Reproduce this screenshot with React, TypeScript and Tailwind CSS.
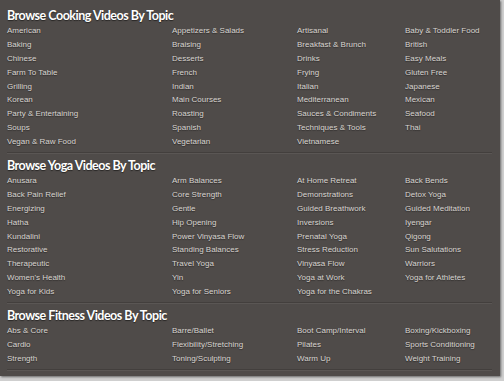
import React from 'react';

type Section = { title: string; items: string[][] };

const sections: Section[] = [
  {
    title: 'Browse Cooking Videos By Topic',
    items: [
      ['American', 'Appetizers & Salads', 'Artisanal', 'Baby & Toddler Food'],
      ['Baking', 'Braising', 'Breakfast & Brunch', 'British'],
      ['Chinese', 'Desserts', 'Drinks', 'Easy Meals'],
      ['Farm To Table', 'French', 'Frying', 'Gluten Free'],
      ['Grilling', 'Indian', 'Italian', 'Japanese'],
      ['Korean', 'Main Courses', 'Mediterranean', 'Mexican'],
      ['Party & Entertaining', 'Roasting', 'Sauces & Condiments', 'Seafood'],
      ['Soups', 'Spanish', 'Techniques & Tools', 'Thai'],
      ['Vegan & Raw Food', 'Vegetarian', 'Vietnamese', ''],
    ],
  },
  {
    title: 'Browse Yoga Videos By Topic',
    items: [
      ['Anusara', 'Arm Balances', 'At Home Retreat', 'Back Bends'],
      ['Back Pain Relief', 'Core Strength', 'Demonstrations', 'Detox Yoga'],
      ['Energizing', 'Gentle', 'Guided Breathwork', 'Guided Meditation'],
      ['Hatha', 'Hip Opening', 'Inversions', 'Iyengar'],
      ['Kundalini', 'Power Vinyasa Flow', 'Prenatal Yoga', 'Qigong'],
      ['Restorative', 'Standing Balances', 'Stress Reduction', 'Sun Salutations'],
      ['Therapeutic', 'Travel Yoga', 'Vinyasa Flow', 'Warriors'],
      ["Women's Health", 'Yin', 'Yoga at Work', 'Yoga for Athletes'],
      ['Yoga for Kids', 'Yoga for Seniors', 'Yoga for the Chakras', ''],
    ],
  },
  {
    title: 'Browse Fitness Videos By Topic',
    items: [
      ['Abs & Core', 'Barre/Ballet', 'Boot Camp/Interval', 'Boxing/Kickboxing'],
      ['Cardio', 'Flexibility/Stretching', 'Pilates', 'Sports Conditioning'],
      ['Strength', 'Toning/Sculpting', 'Warm Up', 'Weight Training'],
    ],
  },
];

const Divider = () => (
  <div className="mt-[3px] mr-[8px] border-t border-[#433f3d] border-b border-b-[#5a5654]" />
);

export default function App() {
  return (
    <div className="w-[504px] h-[381px] bg-[#cfcfcf] overflow-hidden">
      <div className="w-[500px] h-[376px] bg-[#4f4b49] pt-[7px] pl-[7px] shadow-[1px_1px_2px_rgba(0,0,0,0.5)]">
        {sections.map((s, si) => (
          <div key={s.title} className={si > 0 ? 'mt-[3px]' : ''}>
            <h2 className="h-[17px] leading-[17px] text-[12.5px] font-bold text-white tracking-[-0.04em] font-['Lato',sans-serif] [text-shadow:0_1px_1px_rgba(0,0,0,0.5)]">
              {s.title}
            </h2>
            <div className="font-['Liberation_Sans',Arial,sans-serif] text-[8px] text-[#d8d4d0] [text-shadow:0_1px_1px_rgba(0,0,0,0.4)]">
              {s.items.map((row, ri) => (
                <div key={ri} className="grid grid-cols-[165px_125px_108px_1fr] h-[13.9px] leading-[13.9px]">
                  {row.map((item, ci) => (
                    <span key={ci} className="whitespace-nowrap">{item}</span>
                  ))}
                </div>
              ))}
            </div>
            <Divider />
          </div>
        ))}
      </div>
    </div>
  );
}
